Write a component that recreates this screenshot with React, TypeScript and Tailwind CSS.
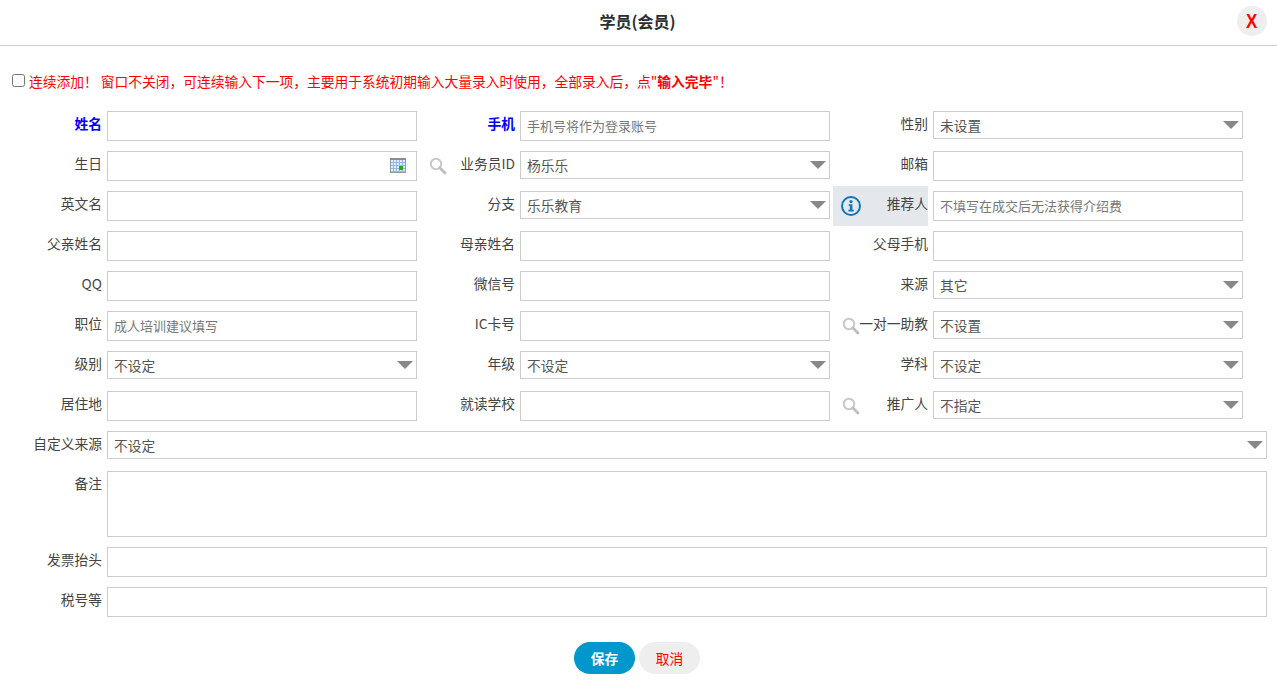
import type {ReactNode} from "react";

const font = "font-['Noto_Sans_CJK_SC','Noto_Sans',sans-serif]";

function Label({children, className = "text-[#444]"}: {children: ReactNode; className?: string}) {
    return <div className={`flex items-start justify-end pr-[5px] pt-[2px] text-[13.75px] leading-[20px] ${className}`}>{children}</div>;
}

function TextBox({placeholder, className = ""}: {placeholder?: string; className?: string}) {
    return (
        <input placeholder={placeholder}
               className={`block w-full h-[30px] border border-[#ccc] bg-white px-[6px] pb-[2px] text-[13px] text-[#555] outline-none placeholder:text-[#777] ${className}`}/>
    );
}

function Select({value}: {value: string}) {
    return (
        <div className="relative h-[28px] w-full">
            <select defaultValue={value}
                    className="block h-[28px] w-full appearance-none border border-[#ccc] bg-white px-[6px] pt-[1px] text-[13.75px] text-[#555] outline-none">
                <option>{value}</option>
            </select>
            <svg className="absolute right-[4px] top-[10px]" width="16" height="8" viewBox="0 0 16 8">
                <path d="M0 0H16L8 8Z" fill="#888"/>
            </svg>
        </div>
    );
}

function SearchIcon() {
    return (
        <svg width="18" height="18" viewBox="0 0 18 18" fill="none">
            <circle cx="7" cy="7" r="5.2" stroke="#c8c8c8" strokeWidth="2"/>
            <path d="M11 11L16 16" stroke="#bdbdbd" strokeWidth="2.8" strokeLinecap="round"/>
        </svg>
    );
}

function CalendarIcon() {
    return (
        <svg className="absolute right-[11px] top-[7px]" width="16" height="15" viewBox="0 0 16 15">
            <rect x="0.5" y="0.5" width="15" height="14" fill="#e3edfb" stroke="#9a9a9a"/>
            <rect x="0" y="0" width="16" height="2" fill="#8a8f8c"/>
            <path d="M1 4.5H15M1 7.5H15M1 10.5H15M1 13.5H15M3.5 2V14M6.5 2V14M9.5 2V14M12.5 2V14" stroke="#8fb8ee" strokeWidth="1"/>
            <rect x="9" y="8" width="4" height="4" fill="#22b014"/>
        </svg>
    );
}

function InfoIcon() {
    return (
        <svg width="20" height="20" viewBox="0 0 20 20" fill="none">
            <circle cx="10" cy="10" r="9" stroke="#0f75bc" strokeWidth="2"/>
            <circle cx="10" cy="5.6" r="1.6" fill="#0f75bc"/>
            <path d="M7.6 8.2H11.4V13.8H12.8V15.4H7.4V13.8H8.8V9.8H7.6Z" fill="#0f75bc"/>
        </svg>
    );
}

export default function App() {
    return (
        <div className={`relative h-[682px] w-[1277px] overflow-hidden rounded-b-[6px] bg-white ${font}`}>
            <div className="relative flex h-[46px] items-start justify-center border-b border-[#ccc]">
                <h3 className="mt-[9px] text-[16px] leading-[24px] font-bold text-[#2b2f33] -translate-x-px">学员(会员)</h3>
                <button className="absolute right-[10px] top-[6px] flex h-[30px] w-[30px] items-center justify-center rounded-full bg-[#eee] font-['Liberation_Sans',sans-serif] text-[20px] font-bold text-[#f00]">
                    <span className="scale-x-85">X</span>
                </button>
            </div>

            <div className="flex h-[65px] items-start pl-[12px] pt-[25px] text-[13.75px] leading-[20px] text-[#f00]">
                <input type="checkbox" className="mr-[3px] mt-[3px] h-[13px] w-[13px]"/>
                <span className="pl-px">连续添加！ 窗口不关闭，可连续输入下一项，主要用于系统初期输入大量录入时使用，全部录入后，点"<b>输入完毕</b>"！</span>
            </div>

            <div className="grid w-[1243px] grid-cols-[107px_310px_103px_310px_103px_310px] auto-rows-[30px] gap-y-[10px]">
                <Label className="font-bold text-[#00f]">姓名</Label>
                <TextBox/>
                <Label className="font-bold text-[#00f]">手机</Label>
                <TextBox placeholder="手机号将作为登录账号"/>
                <Label>性别</Label>
                <Select value="未设置"/>

                <Label>生日</Label>
                <div className="relative">
                    <TextBox/>
                    <CalendarIcon/>
                </div>
                <Label className="relative text-[#444]">
                    <span className="absolute left-[12px] top-[6px]"><SearchIcon/></span>
                    业务员ID
                </Label>
                <Select value="杨乐乐"/>
                <Label>邮箱</Label>
                <TextBox/>

                <Label>英文名</Label>
                <TextBox/>
                <Label>分支</Label>
                <Select value="乐乐教育"/>
                <Label className="relative text-[#444]">
                    <div className="absolute left-[3px] top-[-5px] flex h-[40px] w-[95px] items-center bg-[#e4e8ec] pl-[8px]">
                        <InfoIcon/>
                    </div>
                    <span className="relative">推荐人</span>
                </Label>
                <TextBox placeholder="不填写在成交后无法获得介绍费"/>

                <Label>父亲姓名</Label>
                <TextBox/>
                <Label>母亲姓名</Label>
                <TextBox/>
                <Label>父母手机</Label>
                <TextBox/>

                <Label>QQ</Label>
                <TextBox/>
                <Label>微信号</Label>
                <TextBox/>
                <Label>来源</Label>
                <Select value="其它"/>

                <Label>职位</Label>
                <TextBox placeholder="成人培训建议填写"/>
                <Label>IC卡号</Label>
                <TextBox/>
                <Label className="relative text-[#444]">
                    <span className="absolute left-[12px] top-[6px]"><SearchIcon/></span>
                    一对一助教
                </Label>
                <Select value="不设置"/>

                <Label>级别</Label>
                <Select value="不设定"/>
                <Label>年级</Label>
                <Select value="不设定"/>
                <Label>学科</Label>
                <Select value="不设定"/>

                <Label>居住地</Label>
                <TextBox/>
                <Label>就读学校</Label>
                <TextBox/>
                <Label className="relative text-[#444]">
                    <span className="absolute left-[12px] top-[6px]"><SearchIcon/></span>
                    推广人
                </Label>
                <Select value="不指定"/>
            </div>

            <div className="mt-[10px] grid w-[1267px] grid-cols-[107px_1fr]">
                <Label>自定义来源</Label>
                <Select value="不设定"/>
                <Label className="mt-[12px] text-[#444]">备注</Label>
                <textarea className="mt-[12px] block h-[66px] w-full resize-none border border-[#ccc] bg-white outline-none"/>
                <Label className="mt-[10px] text-[#444]">发票抬头</Label>
                <TextBox className="mt-[10px]"/>
                <Label className="mt-[10px] text-[#444]">税号等</Label>
                <TextBox className="mt-[10px]"/>
            </div>

            <div className="mt-[25px] flex justify-center gap-[4px] pr-[3px]">
                <button className="h-[32px] w-[61px] rounded-full bg-[#0098cc] text-[13.75px] font-bold text-white">保存</button>
                <button className="h-[32px] w-[61px] rounded-full bg-[#eee] text-[13.75px] text-[#f00]">取消</button>
            </div>
        </div>
    );
}
